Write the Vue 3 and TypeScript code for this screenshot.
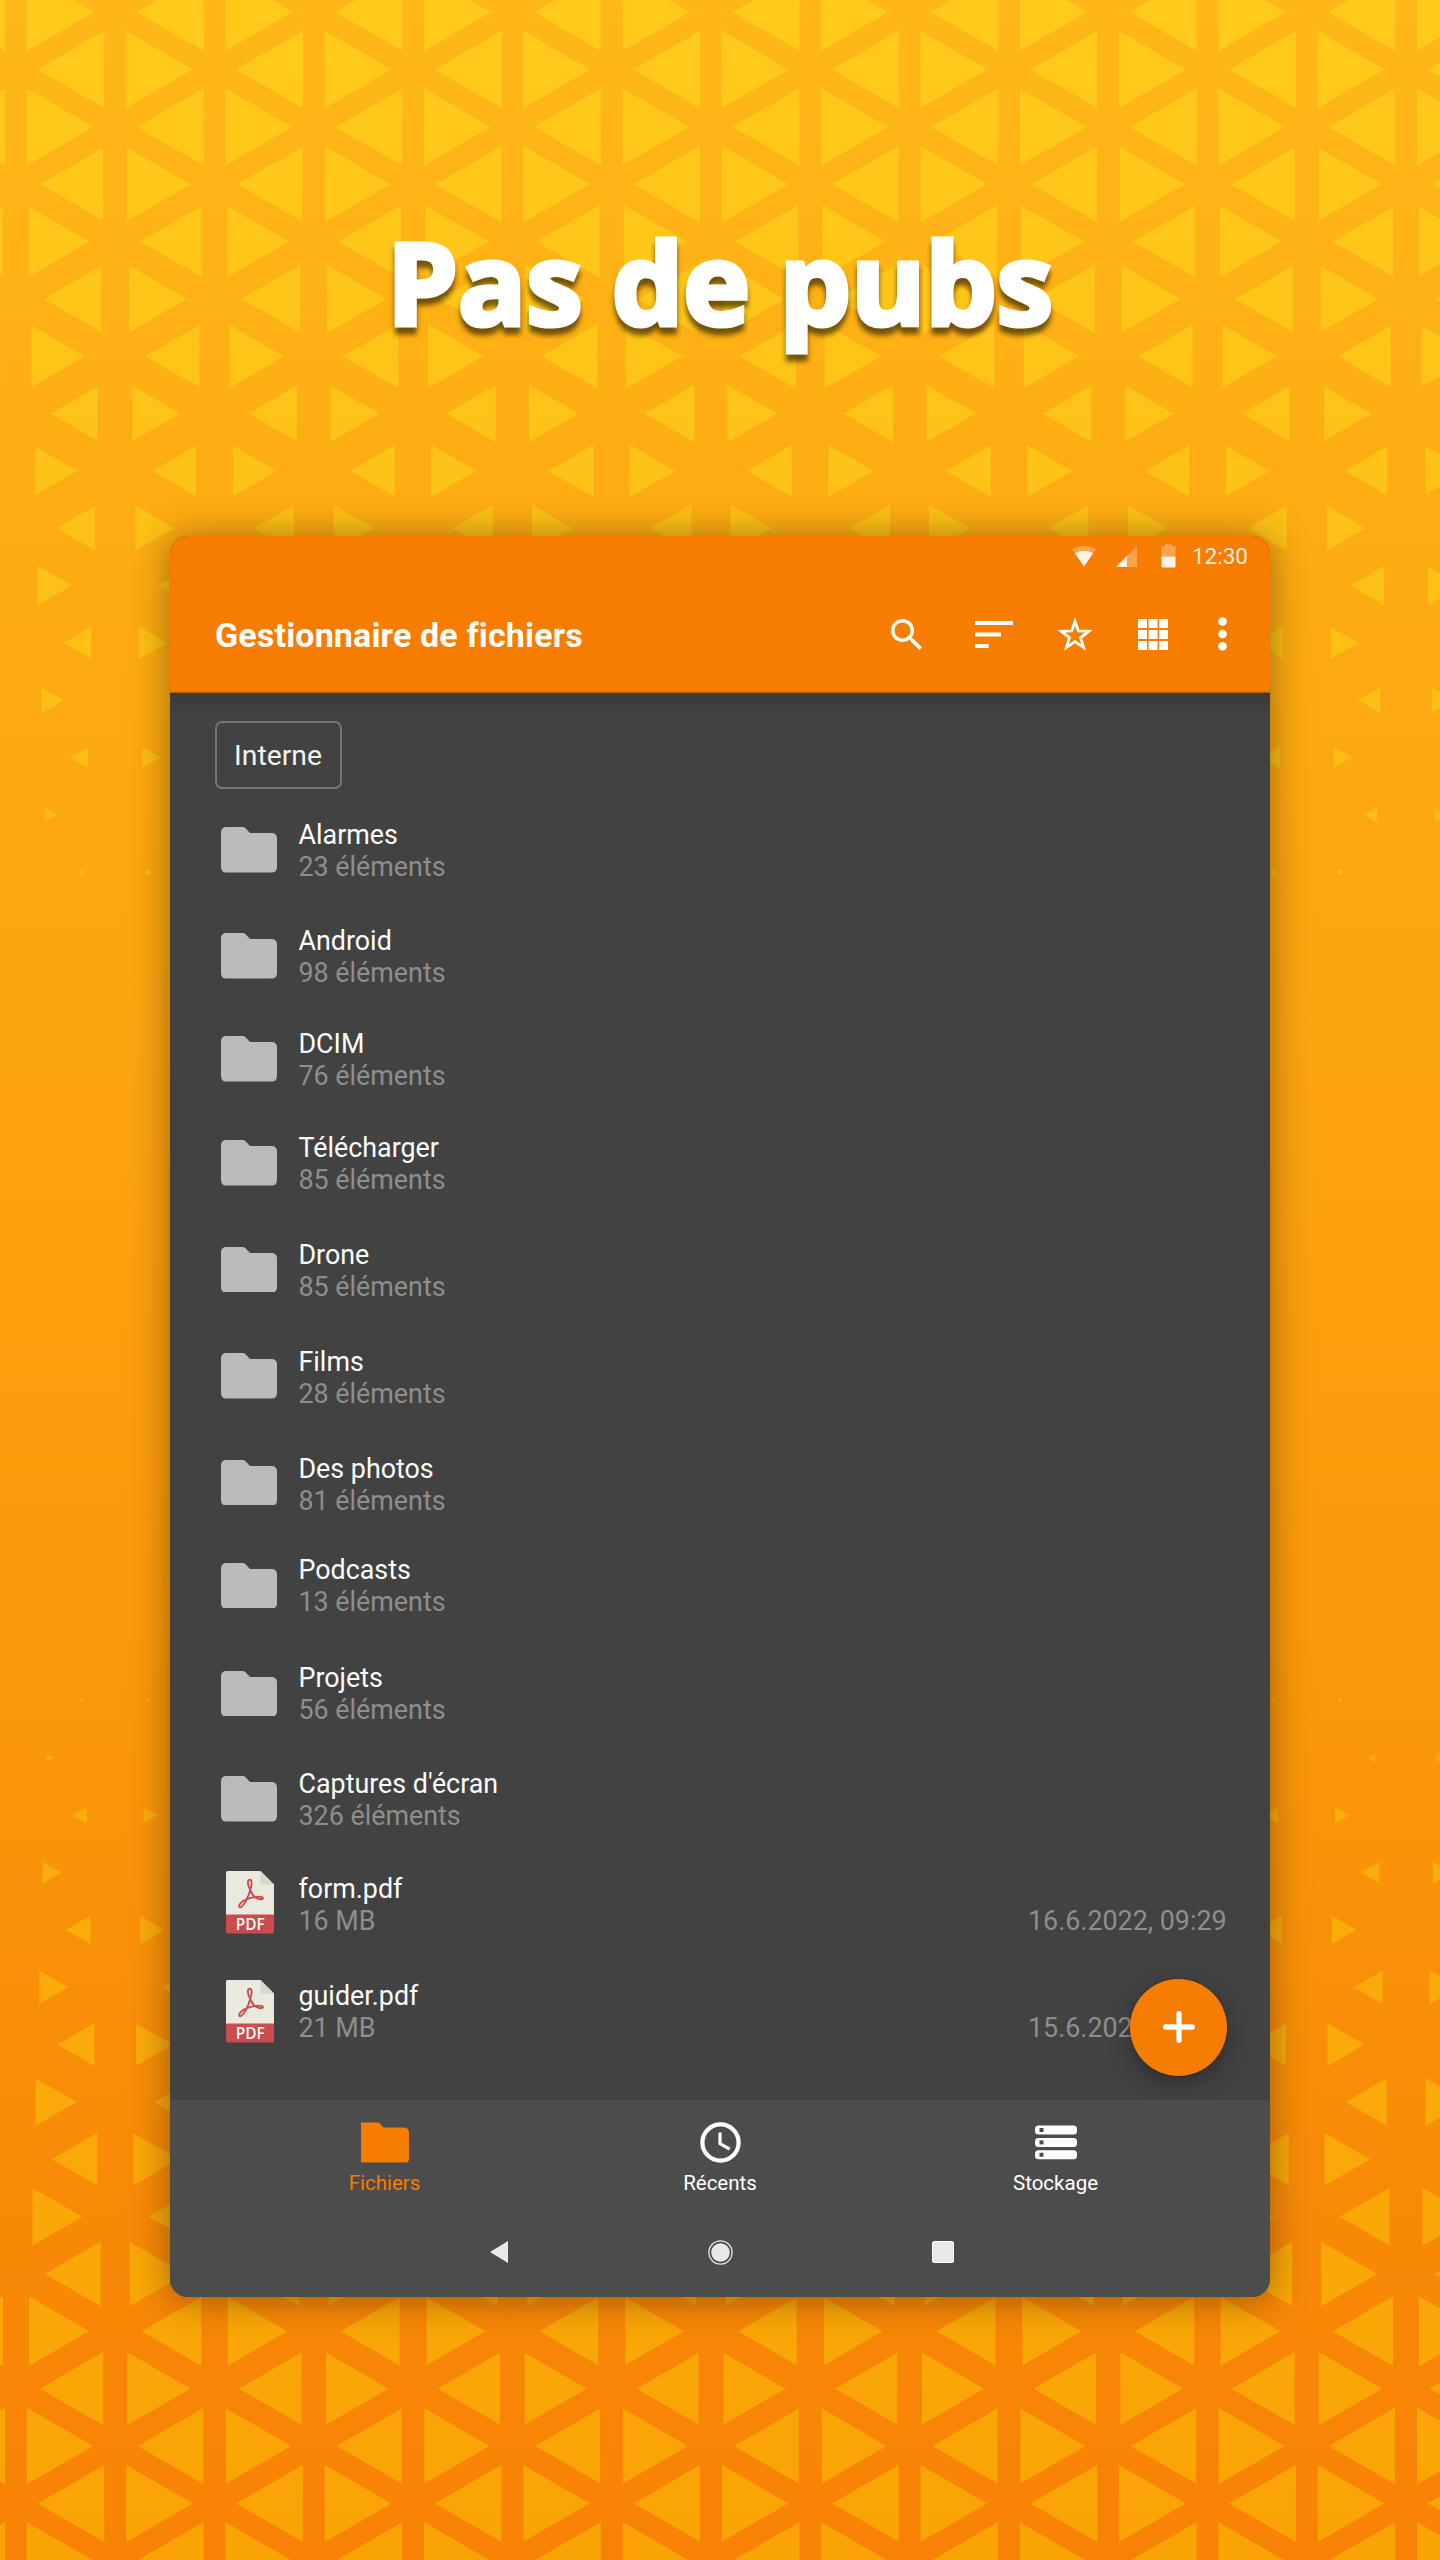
<script setup lang="ts">
interface Entry {
  name: string
  detail: string
  kind: 'folder' | 'pdf'
  height: number
  iconTop: number
  date?: string
}

const entries: Entry[] = [
  { name: 'Alarmes', detail: '23 éléments', kind: 'folder', height: 106, iconTop: 8 },
  { name: 'Android', detail: '98 éléments', kind: 'folder', height: 103, iconTop: 8 },
  { name: 'DCIM', detail: '76 éléments', kind: 'folder', height: 104, iconTop: 8 },
  { name: 'Télécharger', detail: '85 éléments', kind: 'folder', height: 107, iconTop: 8 },
  { name: 'Drone', detail: '85 éléments', kind: 'folder', height: 107, iconTop: 7.5 },
  { name: 'Films', detail: '28 éléments', kind: 'folder', height: 107, iconTop: 7 },
  { name: 'Des photos', detail: '81 éléments', kind: 'folder', height: 101, iconTop: 6.5 },
  { name: 'Podcasts', detail: '13 éléments', kind: 'folder', height: 108, iconTop: 8.5 },
  { name: 'Projets', detail: '56 éléments', kind: 'folder', height: 106, iconTop: 8.5 },
  { name: "Captures d'écran", detail: '326 éléments', kind: 'folder', height: 105, iconTop: 8 },
  { name: 'form.pdf', detail: '16 MB', kind: 'pdf', height: 107, iconTop: -1.7, date: '16.6.2022, 09:29' },
  { name: 'guider.pdf', detail: '21 MB', kind: 'pdf', height: 95, iconTop: 0.3, date: '15.6.2022' },
]

// Triangle lattice: two bands whose triangles shrink towards the middle of the page.
const COLUMN = 99.3
const ROW = 57.34
const CENTER_X = 711

function band(startY: number, firstParity: number, widths: number[], edgeDelta: (row: number) => number): string {
  const parts: string[] = []
  widths.forEach((base, row) => {
    const y = startY + row * ROW
    for (let i = -1; i < 16; i++) {
      const line = 15.9 + i * COLUMN
      if (Math.abs(i + row + firstParity) % 2 !== 0) continue
      for (const dir of [-1, 1]) {
        const cx = line + (dir * COLUMN) / 3
        const t = Math.min(1.2, ((cx - CENTER_X) / 711) ** 2)
        const w = Math.min(66.7, base + edgeDelta(row) * t)
        if (w <= 0) continue
        const bx = cx - (dir * w) / 3
        const tip = cx + (dir * w * 2) / 3
        const h = w / Math.sqrt(3)
        parts.push(`M${bx.toFixed(1)} ${(y - h).toFixed(1)}L${tip.toFixed(1)} ${y.toFixed(1)}L${bx.toFixed(1)} ${(y + h).toFixed(1)}Z`)
      }
    }
  })
  return parts.join('')
}

const topBand = band(
  12.2, 0,
  [66.7, 66.7, 66.7, 66.8, 63.4, 60, 56.1, 49.8, 45.4, 40.9, 37.3, 30.5, 25, 20.3, 15.7, 8.3],
  (row) => (row < 3 ? 0 : row === 3 ? -5 : -3.5),
)
const bottomBand = band(
  1700.6, 1,
  [2.5, 5.5, 13, 17, 23, 27.5, 35.5, 39.5, 44, 48.2, 54.2, 58.5, 61.9, 64.7, 66.2, 66.7],
  () => 1.9,
)
</script>

<template>
  <div class="page">
    <svg class="pattern" viewBox="0 0 1440 2560" width="1440" height="2560" aria-hidden="true">
      <defs>
        <linearGradient id="tri" x1="0" y1="0" x2="0" y2="2560" gradientUnits="userSpaceOnUse">
          <stop offset="0" stop-color="#ffcb1b" />
          <stop offset="0.22" stop-color="#fdc115" />
          <stop offset="0.7" stop-color="#faae0c" />
          <stop offset="1" stop-color="#faa304" />
        </linearGradient>
      </defs>
      <path :d="topBand" fill="url(#tri)" />
      <path :d="bottomBand" fill="url(#tri)" />
    </svg>

    <h1 class="headline">Pas de pubs</h1>

    <main class="device">
      <header class="top">
        <div class="status">
          <svg class="wifi" viewBox="0 0 24 21" width="24" height="21">
            <path d="M0 3.6C7-1.2 17-1.2 24 3.6L12 20.5Z" fill="#fff" fill-opacity=".3" />
            <path d="M3 7.6C8 3.8 16 3.8 21 7.6L12 20.5Z" fill="#fff" fill-opacity=".87" />
          </svg>
          <svg class="signal" viewBox="0 0 21 21" width="21" height="21">
            <path d="M21 0V21H0Z" fill="#fff" fill-opacity=".3" />
            <path d="M11 10V21H0Z" fill="#fff" fill-opacity=".85" />
          </svg>
          <svg class="battery" viewBox="0 0 15 24" width="15" height="24">
            <path d="M4 0h6.5v2H14.500V12.500H.5V2H4Z" fill="#fff" fill-opacity=".3" />
            <path d="M.5 12.500H14.500V22.500L14 23.500H1L.5 22.500Z" fill="#fff" fill-opacity=".9" />
          </svg>
          <span class="time">12:30</span>
        </div>
        <div class="toolbar">
          <span class="title">Gestionnaire de fichiers</span>
          <svg class="search" viewBox="3 3 17.490 17.490" width="31" height="31" fill="#fff">
            <path d="M15.500 14h-.79l-.28-.27C15.410 12.590 16 11.110 16 9.500 16 5.910 13.090 3 9.500 3S3 5.910 3 9.500 5.910 16 9.500 16c1.610 0 3.090-.59 4.230-1.570l.27.28v.79l5 4.990L20.490 19l-4.990-5zm-6 0C7.010 14 5 11.990 5 9.500S7.010 5 9.500 5 14 7.010 14 9.500 11.990 14 9.500 14z" />
          </svg>
          <svg class="sort" viewBox="0 0 38 27" width="38" height="27" fill="#fff">
            <path d="M0 0H38V4H0ZM0 11.500H26V15.500H0ZM0 23H13.700V27H0Z" />
          </svg>
          <svg class="star" viewBox="0 0 36 34" width="36" height="34" fill="none" stroke="#fff" stroke-width="2.800">
            <path d="M18 4.300 21.300 14 31.800 14.300 23.600 20.600 26.500 30.300 18 24.600 9.500 30.300 12.400 20.600 4.200 14.300 14.700 14Z" />
          </svg>
          <svg class="grid" viewBox="0 0 30.500 31" width="30.500" height="31" fill="#fff">
            <template v-for="r in 3" :key="r">
              <rect v-for="c in 3" :key="c" :x="(c - 1) * 10.6" :y="(r - 1) * 11" width="9" height="9" />
            </template>
          </svg>
          <svg class="dots" viewBox="0 0 9 34" width="9" height="34" fill="#fff">
            <circle cx="4.500" cy="4.500" r="4.300" /><circle cx="4.500" cy="17" r="4.300" /><circle cx="4.500" cy="29.300" r="4.300" />
          </svg>
        </div>
      </header>

      <section class="content">
        <div class="chip">Interne</div>
        <ul class="list">
          <li v-for="e in entries" :key="e.name" class="row" :style="{ height: e.height + 'px' }">
            <div class="icon" :style="{ paddingTop: Math.max(0, e.iconTop) + 'px', marginTop: Math.min(0, e.iconTop) + 'px' }">
              <svg v-if="e.kind === 'folder'" class="folder" viewBox="0 0 56 45.500" width="56" height="45.500">
                <path d="M5.500 0H21.500Q23.500 0 24.800 1.400L29 6H50.500Q56 6 56 11.500V40Q56 45.500 50.500 45.500H5.500Q0 45.500 0 40V5.500Q0 0 5.500 0Z" fill="#bbb" />
              </svg>
              <svg v-else class="pdf" viewBox="0 0 48 62.500" width="48" height="62.500">
                <path d="M1.500 0H34.500L48 13.500V44H0V1.500Q0 0 1.500 0Z" fill="#e9e9e0" />
                <path d="M34.500 0 48 13.500H34.500Z" fill="#d9d7ca" />
                <path d="M0 43.500H48V61Q48 62.500 46.500 62.500H1.500Q0 62.500 0 61Z" fill="#cc4b4c" />
                <path d="M24 18.500C21.500 14 21 9 23.700 8.600 26.500 8.700 25.800 14 24.300 18.800 22.500 26 17.500 36 14 36.400 11.500 35.800 14.500 30 21 28.200 27 26 34 24.800 36.800 26.600 38 29 32 29 28 25.200 25.800 22.800 25 20.500 24 18.500Z" fill="none" stroke="#cc4b4c" stroke-width="1.900" stroke-linejoin="round" />
                <text x="24.300" y="59" text-anchor="middle" textLength="29" lengthAdjust="spacingAndGlyphs" fill="#fff" font-size="15.500" font-weight="600" font-family="Open Sans, sans-serif">PDF</text>
              </svg>
            </div>
            <div class="labels">
              <span class="name">{{ e.name }}</span>
              <span class="detail">{{ e.detail }}</span>
            </div>
            <span v-if="e.date" class="date">{{ e.date }}</span>
          </li>
        </ul>
        <button class="fab" aria-label="Ajouter">
          <svg viewBox="0 0 32 32" width="32" height="32" stroke="#fff" stroke-width="5.300" stroke-linecap="round">
            <path d="M16 2.700V29.300M2.700 16H29.300" />
          </svg>
        </button>
      </section>

      <footer class="bottom">
        <nav class="tabs">
          <div class="tab active">
            <svg viewBox="0 0 48 40" width="48" height="40"><path d="M0 0H16.500Q18 0 19 1L22.500 5H43Q48 5.500 48 10V36.500Q48 40 44.500 40H0Z" fill="#f77d00" /></svg>
            <span>Fichiers</span>
          </div>
          <div class="tab">
            <svg viewBox="0 0 41 41" width="41" height="41" fill="none" stroke="#fff">
              <circle cx="20.500" cy="20.500" r="18.100" stroke-width="4.200" /><path d="M20 10.500V21.600L29.700 27.200" stroke-width="3.200" />
            </svg>
            <span>Récents</span>
          </div>
          <div class="tab">
            <svg viewBox="0 0 42 41" width="42" height="41">
              <g v-for="n in 3" :key="n" :transform="`translate(0 ${3.5 + (n - 1) * 12.4})`">
                <rect width="42" height="9" rx="3.500" fill="#fff" /><rect x="4.500" y="2.500" width="4" height="4" fill="#4c4c4c" />
              </g>
            </svg>
            <span>Stockage</span>
          </div>
        </nav>
        <div class="system">
          <svg viewBox="0 0 18 22" width="18" height="22"><path d="M18 0V22L0 11Z" fill="#e8e8e8" /></svg>
          <svg viewBox="0 0 25 25" width="25" height="25"><circle cx="12.500" cy="12.500" r="11.600" fill="none" stroke="#e8e8e8" stroke-width="1.300" /><circle cx="12.500" cy="12.500" r="9.300" fill="#e8e8e8" /></svg>
          <svg viewBox="0 0 22 22" width="22" height="22"><rect width="22" height="22" rx="2.500" fill="#fff" /><rect x="1" y="1" width="20" height="20" rx="1.500" fill="#e8e8e8" /></svg>
        </div>
      </footer>
    </main>
  </div>
</template>

<style>
body {
  margin: 0;
}
</style>

<style scoped>
.page {
  position: relative;
  width: 1440px;
  height: 2560px;
  overflow: hidden;
  background: linear-gradient(#ffb818 0%, #fdac12 20%, #fca20f 45%, #fb990a 64%, #f88b07 84%, #f88205 100%);
  font-family: Roboto, sans-serif;
}
.pattern {
  position: absolute;
  inset: 0;
}
.headline {
  position: relative;
  box-sizing: border-box;
  height: 536px;
  margin: 0;
  padding-top: 211px;
  text-align: center;
  font: 700 113px/140px "Open Sans", sans-serif;
  letter-spacing: 0;
  color: #fff;
  -webkit-text-stroke: 5px #fff;
  stroke-linejoin: round;
  filter: drop-shadow(0 7px 2.500px rgba(0, 0, 0, 0.55));
}
.device {
  position: relative;
  display: flex;
  flex-direction: column;
  width: 1100px;
  height: 1761px;
  margin-left: 170px;
  border-radius: 18px;
  overflow: hidden;
  background: #424242;
  box-shadow: 0 2px 36px rgba(60, 40, 0, 0.5);
}
.top {
  height: 156.500px;
  background: #f77d00;
  box-shadow: inset 0 -1.500px 0 rgba(70, 50, 20, 0.3);
}
.status {
  display: flex;
  align-items: center;
  justify-content: flex-end;
  height: 40px;
  padding-right: 22px;
}
.signal {
  margin-left: 19.500px;
}
.battery {
  margin-left: 24px;
}
.time {
  margin-left: 16px;
  font-size: 22.500px;
  line-height: 40px;
  color: rgba(255, 255, 255, 0.88);
}
.toolbar {
  display: flex;
  align-items: center;
  height: 116.500px;
  padding: 0 43.500px 0 45px;
  box-sizing: border-box;
}
.title {
  flex: 1;
  padding-top: 1px;
  font-size: 34px;
  font-weight: 700;
  line-height: 40px;
  letter-spacing: 0.16px;
  color: #fff;
}
.sort {
  margin-left: 53px;
}
.star {
  margin-left: 44px;
}
.grid {
  margin-left: 44.500px;
}
.dots {
  margin-left: 49.500px;
}
.content {
  position: relative;
  height: 1407.500px;
  background: linear-gradient(rgba(0, 0, 0, 0.12), transparent 24px);
}
.chip {
  box-sizing: border-box;
  width: 127px;
  height: 68px;
  margin: 28.500px 0 0 45px;
  padding-right: 1px;
  border: 2px solid #757575;
  border-radius: 7px;
  text-align: center;
  font-size: 28.300px;
  line-height: 65px;
  color: #f4f4f4;
}
.list {
  margin: 30px 0 0;
  padding: 0 43px 0 51px;
  list-style: none;
}
.row {
  display: flex;
}
.icon {
  flex: none;
  width: 77.500px;
}
.icon svg {
  display: block;
}
.pdf {
  margin-left: 5px;
  overflow: visible;
}
.labels {
  flex: 1;
  display: flex;
  flex-direction: column;
  font-size: 26.850px;
  line-height: 32px;
}
.name {
  height: 32px;
  color: #fcfcfc;
}
.detail,
.date {
  color: #8e8e8e;
}
.date {
  width: 199px;
  padding-top: 32px;
  font-size: 26.850px;
  line-height: 32px;
  white-space: nowrap;
}
.fab {
  position: absolute;
  top: 1286px;
  left: 960px;
  display: flex;
  align-items: center;
  justify-content: center;
  width: 97px;
  height: 97px;
  padding: 0;
  border: 0;
  border-radius: 50%;
  background: #f77d00;
  box-shadow: 0 8px 22px rgba(0, 0, 0, 0.3), 0 0 3px rgba(0, 0, 0, 0.25);
}
.bottom {
  position: relative;
  flex: 1;
  background: #4c4c4c;
}
.tabs {
  display: flex;
  justify-content: center;
  padding-top: 22px;
}
.tab {
  display: flex;
  flex-direction: column;
  align-items: center;
  width: 335.500px;
  height: 100px;
  font-size: 20.500px;
  line-height: 24px;
  color: #fff;
}
.tab svg {
  height: 41px;
}
.tab span {
  margin-top: 8px;
}
.tab.active {
  color: #f77d00;
}
.system {
  display: flex;
  align-items: center;
  justify-content: space-between;
  width: 464px;
  height: 25px;
  margin: 17.500px 0 0 320px;
}
</style>
